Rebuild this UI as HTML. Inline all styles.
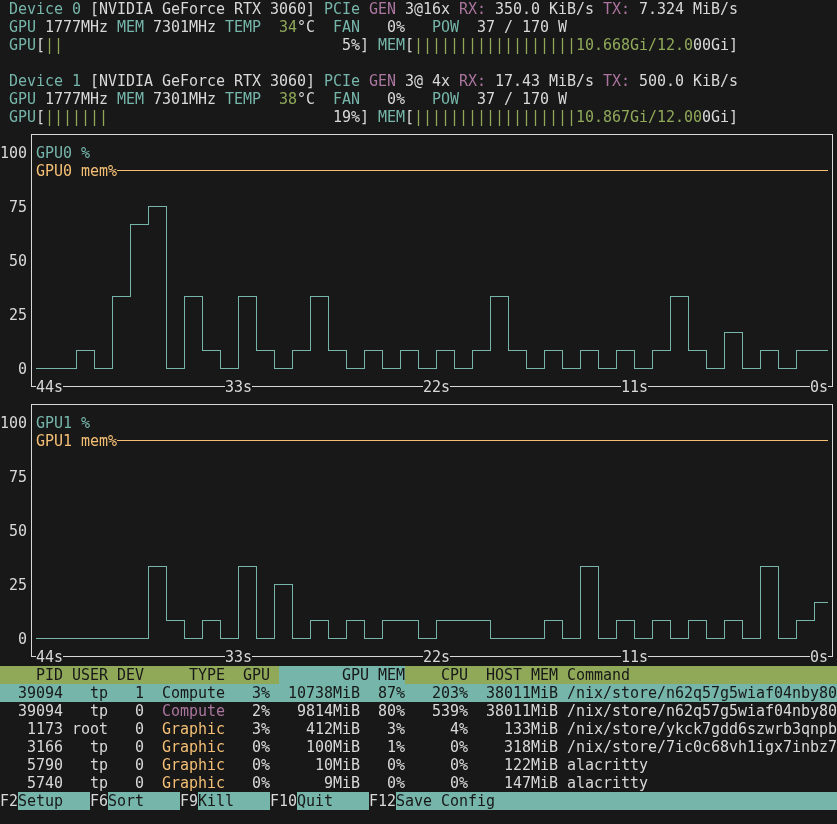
<!DOCTYPE html>
<html lang="en"><head><meta charset="utf-8"><title>nvtop</title>
<style>
html,body{margin:0;padding:0;background:#181818;}
body{width:837px;height:824px;overflow:hidden;position:relative;}
#t{position:absolute;left:0;top:0;width:837px;height:824px;overflow:hidden;background:#181818;font-family:'DejaVu Sans Mono','Liberation Mono',monospace;font-size:15px;line-height:18px;color:#d8d8d8;font-variant-ligatures:none;font-kerning:none;}
.b{position:absolute;height:18px;}
.r{position:absolute;left:0;height:18px;width:837px;white-space:pre;will-change:transform;}
.r span{position:absolute;top:0;height:18px;white-space:pre;letter-spacing:-0.0308px;}
.w{color:#d8d8d8}.c{color:#75b5aa}.g{color:#90a959}.y{color:#f4bf75}.m{color:#aa759f}.k{color:#181818}
svg{position:absolute;left:0;top:0;}
svg path,svg polyline{fill:none;stroke-width:1;shape-rendering:crispEdges;}
</style></head><body>
<div id="t">
<div class="b" style="left:0px;top:666px;width:279px;background:#90a959"></div>
<div class="b" style="left:279px;top:666px;width:126px;background:#75b5aa"></div>
<div class="b" style="left:405px;top:666px;width:432px;background:#90a959"></div>
<div class="b" style="left:0px;top:684px;width:837px;background:#75b5aa"></div>
<div class="b" style="left:18px;top:792px;width:72px;background:#75b5aa"></div>
<div class="b" style="left:108px;top:792px;width:72px;background:#75b5aa"></div>
<div class="b" style="left:198px;top:792px;width:72px;background:#75b5aa"></div>
<div class="b" style="left:297px;top:792px;width:72px;background:#75b5aa"></div>
<div class="b" style="left:396px;top:792px;width:441px;background:#75b5aa"></div>
<svg width="837" height="824" viewBox="0 0 837 824">
<path d="M31.5 386.5L31.5 134.5L832.5 134.5L832.5 386.5" stroke="#d8d8d8"/>
<path d="M31.5 386.5L36 386.5" stroke="#d8d8d8"/>
<path d="M63 386.5L225 386.5" stroke="#d8d8d8"/>
<path d="M252 386.5L423 386.5" stroke="#d8d8d8"/>
<path d="M450 386.5L621 386.5" stroke="#d8d8d8"/>
<path d="M648 386.5L810 386.5" stroke="#d8d8d8"/>
<path d="M828 386.5L832.5 386.5" stroke="#d8d8d8"/>
<path d="M117 170.5L828 170.5" stroke="#f4bf75"/>
<polyline points="36,368.5 76.5,368.5 76.5,350.5 94.5,350.5 94.5,368.5 112.5,368.5 112.5,296.5 130.5,296.5 130.5,224.5 148.5,224.5 148.5,206.5 166.5,206.5 166.5,368.5 184.5,368.5 184.5,296.5 202.5,296.5 202.5,350.5 220.5,350.5 220.5,368.5 238.5,368.5 238.5,296.5 256.5,296.5 256.5,350.5 274.5,350.5 274.5,368.5 292.5,368.5 292.5,350.5 310.5,350.5 310.5,296.5 328.5,296.5 328.5,350.5 346.5,350.5 346.5,368.5 364.5,368.5 364.5,350.5 382.5,350.5 382.5,368.5 400.5,368.5 400.5,350.5 418.5,350.5 418.5,368.5 436.5,368.5 436.5,350.5 454.5,350.5 454.5,368.5 472.5,368.5 472.5,350.5 490.5,350.5 490.5,296.5 508.5,296.5 508.5,350.5 526.5,350.5 526.5,368.5 544.5,368.5 544.5,350.5 562.5,350.5 562.5,368.5 580.5,368.5 580.5,350.5 598.5,350.5 598.5,368.5 616.5,368.5 616.5,350.5 634.5,350.5 634.5,368.5 652.5,368.5 652.5,350.5 670.5,350.5 670.5,296.5 688.5,296.5 688.5,350.5 706.5,350.5 706.5,368.5 724.5,368.5 724.5,332.5 742.5,332.5 742.5,368.5 760.5,368.5 760.5,350.5 778.5,350.5 778.5,368.5 796.5,368.5 796.5,350.5 828,350.5" stroke="#75b5aa"/>
<path d="M31.5 656.5L31.5 404.5L832.5 404.5L832.5 656.5" stroke="#d8d8d8"/>
<path d="M31.5 656.5L36 656.5" stroke="#d8d8d8"/>
<path d="M63 656.5L225 656.5" stroke="#d8d8d8"/>
<path d="M252 656.5L423 656.5" stroke="#d8d8d8"/>
<path d="M450 656.5L621 656.5" stroke="#d8d8d8"/>
<path d="M648 656.5L810 656.5" stroke="#d8d8d8"/>
<path d="M828 656.5L832.5 656.5" stroke="#d8d8d8"/>
<path d="M117 440.5L828 440.5" stroke="#f4bf75"/>
<polyline points="36,638.5 148.5,638.5 148.5,566.5 166.5,566.5 166.5,620.5 184.5,620.5 184.5,638.5 202.5,638.5 202.5,620.5 220.5,620.5 220.5,638.5 238.5,638.5 238.5,566.5 256.5,566.5 256.5,638.5 274.5,638.5 274.5,584.5 292.5,584.5 292.5,638.5 310.5,638.5 310.5,620.5 328.5,620.5 328.5,638.5 346.5,638.5 346.5,620.5 364.5,620.5 364.5,638.5 382.5,638.5 382.5,620.5 418.5,620.5 418.5,638.5 436.5,638.5 436.5,620.5 490.5,620.5 490.5,638.5 544.5,638.5 544.5,620.5 562.5,620.5 562.5,638.5 580.5,638.5 580.5,566.5 598.5,566.5 598.5,638.5 616.5,638.5 616.5,620.5 634.5,620.5 634.5,638.5 652.5,638.5 652.5,620.5 670.5,620.5 670.5,638.5 688.5,638.5 688.5,620.5 706.5,620.5 706.5,638.5 724.5,638.5 724.5,620.5 742.5,620.5 742.5,638.5 760.5,638.5 760.5,566.5 778.5,566.5 778.5,638.5 796.5,638.5 796.5,620.5 814.5,620.5 814.5,602.5 828,602.5" stroke="#75b5aa"/>
</svg>
<div class="r" style="top:0px"><span class="c" style="left:9px">Device 0</span><span class="w" style="left:90px">[NVIDIA GeForce RTX 3060]</span><span class="c" style="left:324px">PCIe</span><span class="m" style="left:369px">GEN</span><span class="w" style="left:405px">3@16x</span><span class="m" style="left:459px">RX:</span><span class="w" style="left:495px">350.0 KiB/s</span><span class="m" style="left:603px">TX:</span><span class="w" style="left:639px">7.324 MiB/s</span></div>
<div class="r" style="top:18px"><span class="c" style="left:9px">GPU</span><span class="w" style="left:45px">1777MHz</span><span class="c" style="left:117px">MEM</span><span class="w" style="left:153px">7301MHz</span><span class="c" style="left:225px">TEMP</span><span class="g" style="left:279px">34</span><span class="w" style="left:297px">°C</span><span class="c" style="left:333px">FAN</span><span class="w" style="left:387px">0%</span><span class="c" style="left:432px">POW</span><span class="w" style="left:477px">37 / 170 W</span></div>
<div class="r" style="top:36px"><span class="c" style="left:9px">GPU</span><span class="w" style="left:36px">[</span><span class="g" style="left:45px">||</span><span class="w" style="left:342px">5%</span><span class="w" style="left:360px">]</span><span class="c" style="left:378px">MEM</span><span class="w" style="left:405px">[</span><span class="g" style="left:414px">||||||||||||||||||</span><span class="g" style="left:576px">10.668Gi/12.0</span><span class="w" style="left:693px">00Gi</span><span class="w" style="left:729px">]</span></div>
<div class="r" style="top:72px"><span class="c" style="left:9px">Device 1</span><span class="w" style="left:90px">[NVIDIA GeForce RTX 3060]</span><span class="c" style="left:324px">PCIe</span><span class="m" style="left:369px">GEN</span><span class="w" style="left:405px">3@ 4x</span><span class="m" style="left:459px">RX:</span><span class="w" style="left:495px">17.43 MiB/s</span><span class="m" style="left:603px">TX:</span><span class="w" style="left:639px">500.0 KiB/s</span></div>
<div class="r" style="top:90px"><span class="c" style="left:9px">GPU</span><span class="w" style="left:45px">1777MHz</span><span class="c" style="left:117px">MEM</span><span class="w" style="left:153px">7301MHz</span><span class="c" style="left:225px">TEMP</span><span class="g" style="left:279px">38</span><span class="w" style="left:297px">°C</span><span class="c" style="left:333px">FAN</span><span class="w" style="left:387px">0%</span><span class="c" style="left:432px">POW</span><span class="w" style="left:477px">37 / 170 W</span></div>
<div class="r" style="top:108px"><span class="c" style="left:9px">GPU</span><span class="w" style="left:36px">[</span><span class="g" style="left:45px">|||||||</span><span class="w" style="left:333px">19%</span><span class="w" style="left:360px">]</span><span class="c" style="left:378px">MEM</span><span class="w" style="left:405px">[</span><span class="g" style="left:414px">||||||||||||||||||</span><span class="g" style="left:576px">10.867Gi/12.00</span><span class="w" style="left:702px">0Gi</span><span class="w" style="left:729px">]</span></div>
<div class="r" style="top:144px"><span class="w" style="left:0px">100</span><span class="c" style="left:36px">GPU0 %</span></div>
<div class="r" style="top:162px"><span class="y" style="left:36px">GPU0 mem%</span></div>
<div class="r" style="top:198px"><span class="w" style="left:9px">75</span></div>
<div class="r" style="top:252px"><span class="w" style="left:9px">50</span></div>
<div class="r" style="top:306px"><span class="w" style="left:9px">25</span></div>
<div class="r" style="top:360px"><span class="w" style="left:18px">0</span></div>
<div class="r" style="top:378px"><span class="w" style="left:36px">44s</span><span class="w" style="left:225px">33s</span><span class="w" style="left:423px">22s</span><span class="w" style="left:621px">11s</span><span class="w" style="left:810px">0s</span></div>
<div class="r" style="top:414px"><span class="w" style="left:0px">100</span><span class="c" style="left:36px">GPU1 %</span></div>
<div class="r" style="top:432px"><span class="y" style="left:36px">GPU1 mem%</span></div>
<div class="r" style="top:468px"><span class="w" style="left:9px">75</span></div>
<div class="r" style="top:522px"><span class="w" style="left:9px">50</span></div>
<div class="r" style="top:576px"><span class="w" style="left:9px">25</span></div>
<div class="r" style="top:630px"><span class="w" style="left:18px">0</span></div>
<div class="r" style="top:648px"><span class="w" style="left:36px">44s</span><span class="w" style="left:225px">33s</span><span class="w" style="left:423px">22s</span><span class="w" style="left:621px">11s</span><span class="w" style="left:810px">0s</span></div>
<div class="r" style="top:666px"><span class="k" style="left:36px">PID</span><span class="k" style="left:72px">USER</span><span class="k" style="left:117px">DEV</span><span class="k" style="left:189px">TYPE</span><span class="k" style="left:243px">GPU</span><span class="k" style="left:342px">GPU MEM</span><span class="k" style="left:441px">CPU</span><span class="k" style="left:486px">HOST MEM</span><span class="k" style="left:567px">Command</span></div>
<div class="r" style="top:684px"><span class="k" style="left:18px">39094</span><span class="k" style="left:90px">tp</span><span class="k" style="left:135px">1</span><span class="k" style="left:162px">Compute</span><span class="k" style="left:252px">3%</span><span class="k" style="left:288px">10738MiB</span><span class="k" style="left:378px">87%</span><span class="k" style="left:432px">203%</span><span class="k" style="left:486px">38011MiB</span><span class="k" style="left:567px">/nix/store/n62q57g5wiaf04nby80</span></div>
<div class="r" style="top:702px"><span class="w" style="left:18px">39094</span><span class="w" style="left:90px">tp</span><span class="w" style="left:135px">0</span><span class="m" style="left:162px">Compute</span><span class="w" style="left:252px">2%</span><span class="w" style="left:297px">9814MiB</span><span class="w" style="left:378px">80%</span><span class="w" style="left:432px">539%</span><span class="w" style="left:486px">38011MiB</span><span class="w" style="left:567px">/nix/store/n62q57g5wiaf04nby80</span></div>
<div class="r" style="top:720px"><span class="w" style="left:27px">1173</span><span class="w" style="left:72px">root</span><span class="w" style="left:135px">0</span><span class="y" style="left:162px">Graphic</span><span class="w" style="left:252px">3%</span><span class="w" style="left:306px">412MiB</span><span class="w" style="left:387px">3%</span><span class="w" style="left:450px">4%</span><span class="w" style="left:504px">133MiB</span><span class="w" style="left:567px">/nix/store/ykck7gdd6szwrb3qnpb</span></div>
<div class="r" style="top:738px"><span class="w" style="left:27px">3166</span><span class="w" style="left:90px">tp</span><span class="w" style="left:135px">0</span><span class="y" style="left:162px">Graphic</span><span class="w" style="left:252px">0%</span><span class="w" style="left:306px">100MiB</span><span class="w" style="left:387px">1%</span><span class="w" style="left:450px">0%</span><span class="w" style="left:504px">318MiB</span><span class="w" style="left:567px">/nix/store/7ic0c68vh1igx7inbz7</span></div>
<div class="r" style="top:756px"><span class="w" style="left:27px">5790</span><span class="w" style="left:90px">tp</span><span class="w" style="left:135px">0</span><span class="y" style="left:162px">Graphic</span><span class="w" style="left:252px">0%</span><span class="w" style="left:315px">10MiB</span><span class="w" style="left:387px">0%</span><span class="w" style="left:450px">0%</span><span class="w" style="left:504px">122MiB</span><span class="w" style="left:567px">alacritty</span></div>
<div class="r" style="top:774px"><span class="w" style="left:27px">5740</span><span class="w" style="left:90px">tp</span><span class="w" style="left:135px">0</span><span class="y" style="left:162px">Graphic</span><span class="w" style="left:252px">0%</span><span class="w" style="left:324px">9MiB</span><span class="w" style="left:387px">0%</span><span class="w" style="left:450px">0%</span><span class="w" style="left:504px">147MiB</span><span class="w" style="left:567px">alacritty</span></div>
<div class="r" style="top:792px"><span class="w" style="left:0px">F2</span><span class="k" style="left:18px">Setup</span><span class="w" style="left:90px">F6</span><span class="k" style="left:108px">Sort</span><span class="w" style="left:180px">F9</span><span class="k" style="left:198px">Kill</span><span class="w" style="left:270px">F10</span><span class="k" style="left:297px">Quit</span><span class="w" style="left:369px">F12</span><span class="k" style="left:396px">Save Config</span></div>
</div>
</body></html>
